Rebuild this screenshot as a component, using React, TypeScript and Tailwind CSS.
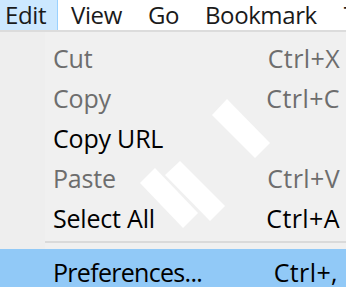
import React from 'react';

const font = { fontFamily: '"Open Sans", "Noto Sans", sans-serif' };

type Item = { label: string; keys: string; disabled?: boolean };

const items: Item[] = [
  { label: 'Cut', keys: 'Ctrl+X', disabled: true },
  { label: 'Copy', keys: 'Ctrl+C', disabled: true },
  { label: 'Copy URL', keys: '' },
  { label: 'Paste', keys: 'Ctrl+V', disabled: true },
  { label: 'Select All', keys: 'Ctrl+A' },
];

function Row({ item }: { item: Item }) {
  const color = item.disabled ? 'text-[#6d6d6d]' : 'text-black';
  return (
    <div className={`flex h-10 items-center justify-between pl-[53px] pr-[6px] pt-[5px] ${color}`}>
      <span className="tracking-[-0.2px]">{item.label}</span>
      <span className="tracking-[0.4px]">{item.keys}</span>
    </div>
  );
}

export default function App() {
  return (
    <div
      className="relative h-[287px] w-[346px] overflow-hidden bg-[#f0f0f0] leading-[32px]"
      style={font}
    >
      <div className="flex h-[32px] w-full items-center overflow-hidden whitespace-nowrap border-b-2 border-[#dcdcdc] bg-white text-[24px] leading-[30px] tracking-[-0.4px] text-[#1a1a1a]">
        <div className="flex h-full shrink-0 items-center border-r border-[#99d1ff] bg-[#cce8ff] pl-[5px] pr-[11px]">Edit</div>
        <div className="shrink-0 px-[13px]">View</div>
        <div className="shrink-0 px-[13px]">Go</div>
        <div className="shrink-0 px-[13px]">Bookmark</div>
        <div className="min-w-0 flex-1 overflow-hidden pl-[14px]">Tools</div>
      </div>

      <div className="relative pt-[3px] text-[25px]">
        <div className="absolute bottom-0 left-0 top-0 w-[45px] bg-[#eeeeee]" />
        <svg className="absolute left-0 top-0" width="346" height="260" viewBox="0 34 346 260">
          <polygon points="212,117 227,101 270,145 255,160" fill="#fff" />
          <polygon points="140,185 155,170 198,215 183,230" fill="#fff" />
          <polygon points="165,177 180,163 225,208 210,223" fill="#fff" />
        </svg>
        <div className="relative">
          {items.map((it) => (
            <Row key={it.label} item={it} />
          ))}
          <div className="flex h-[14px] items-center pl-[45px]">
            <div className="h-[2px] w-full bg-[#dadada]" />
          </div>
          <div className="flex h-10 items-center justify-between bg-[#91c9f7] pl-[53px] pr-[8px] pt-[5px] text-black">
            <span className="tracking-[-0.7px]">Preferences...</span>
            <span className="tracking-[0.4px]">Ctrl+,</span>
          </div>
        </div>
      </div>
    </div>
  );
}
